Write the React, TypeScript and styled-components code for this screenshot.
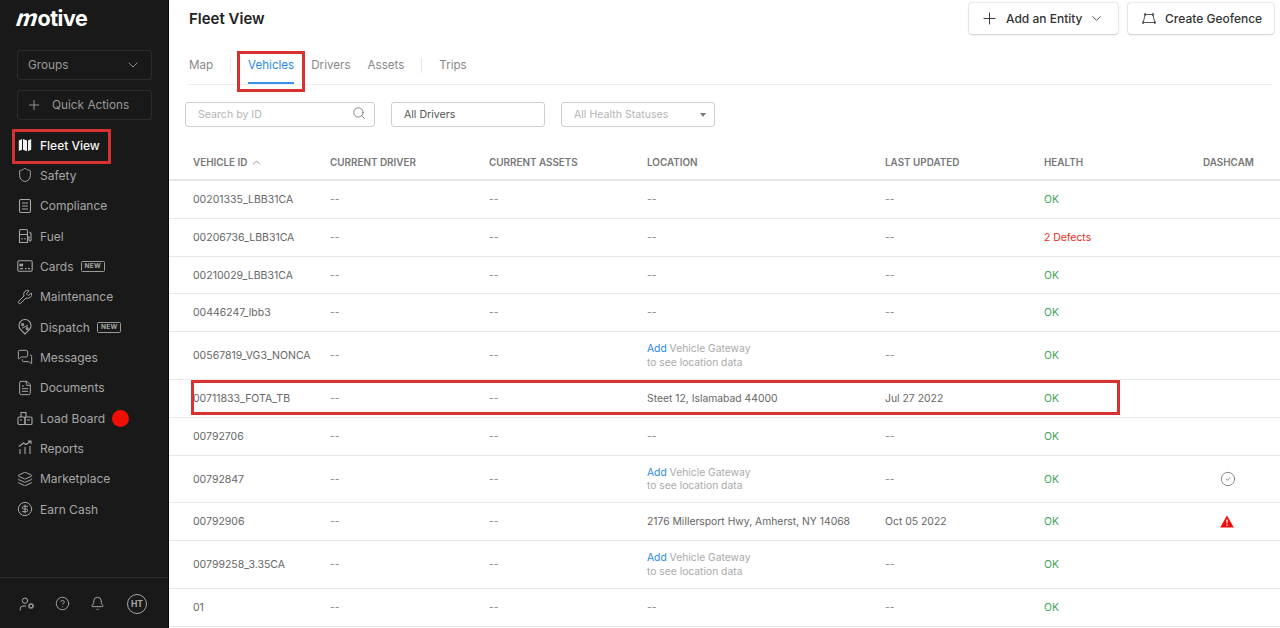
import styled, { createGlobalStyle } from "styled-components";
import {
  Bell,
  ChevronDown,
  ChevronUp,
  CircleCheck,
  CircleDollarSign,
  CircleHelp,
  FileText,
  Layers,
  MessagesSquare,
  Plus,
  Search,
  Shield,
  UserCog,
  Wrench,
} from "lucide-react";
import type { ReactNode } from "react";

const GlobalStyle = createGlobalStyle`
  html, body {
    margin: 0;
    padding: 0;
    background: #fff;
    font-family: Inter, "Liberation Sans", sans-serif;
  }
  * { box-sizing: border-box; }
`;

const MapIcon = () => (
  <svg width="16" height="16" viewBox="0 0 16 16" fill="#f2f2f2">
    <path d="M1.8 3.4 5 2v10.8l-3.2 1.2z" />
    <path d="M6 2l4 1.4v10.8L6 12.8z" />
    <path d="M11 3.4 14.2 2v10.8L11 14.2z" />
  </svg>
);

const ComplianceIcon = () => (
  <svg width="16" height="16" viewBox="0 0 16 16" fill="none" stroke="#a6a6a6" strokeWidth="1.1">
    <rect x="2.5" y="1.5" width="11" height="13" rx="1.5" />
    <path d="M5 5h6M5 8h6M5 11h6" />
  </svg>
);

const FuelIcon = () => (
  <svg width="16" height="16" viewBox="0 0 16 16" fill="none" stroke="#a6a6a6" strokeWidth="1.1">
    <path d="M2.5 14.5V3A1.5 1.5 0 0 1 4 1.500h5A1.500 1.500 0 0 1 10.500 3v11.500z" />
    <path d="M2.500 6.500h8M5 10v1.500M8 10v1.500" />
    <path d="M10.500 9H12v3a1 1 0 0 0 2 0V5.500L12.500 4" />
  </svg>
);

const CardIcon = () => (
  <svg width="16" height="16" viewBox="0 0 16 16" fill="none" stroke="#a6a6a6" strokeWidth="1.1">
    <rect x="0.8" y="2.8" width="14.4" height="10.4" rx="1.2" />
    <path d="M3 6.200h2.500v1.600H3z" fill="#a6a6a6" />
    <path d="M3 10.600h3M8 10.600h1.500M11 10.600h2" />
  </svg>
);

const DispatchIcon = () => (
  <svg width="16" height="16" viewBox="0 0 16 16" fill="none" stroke="#a6a6a6" strokeWidth="1.1">
    <path d="M8 15 3.400 10.400a6 6 0 1 1 9.200 0z" />
    <path d="M5.500 9.500c0-2 5-1.500 5-3.500" />
    <circle cx="5.600" cy="5.600" r="1" />
    <circle cx="10.200" cy="9.600" r="1" />
  </svg>
);

const LoadBoardIcon = () => (
  <svg width="16" height="16" viewBox="0 0 16 16" fill="none" stroke="#a6a6a6" strokeWidth="1.1">
    <path d="M4 7V2.500h5V7" />
    <rect x="1" y="7" width="7" height="7.500" rx="1" />
    <rect x="8" y="7" width="7" height="7.500" rx="1" />
    <path d="M3 10h2M10 10h3" />
  </svg>
);

const ReportsIcon = () => (
  <svg width="16" height="16" viewBox="0 0 16 16" fill="none" stroke="#a6a6a6" strokeWidth="1.1">
    <path d="M3 14V9M8 14V7M13 14V6" />
    <path d="M2 6.500 6.500 3 9 4.500 14 1M11 1h3v3" />
  </svg>
);

const GeofenceIcon = () => (
  <svg width="14" height="14" viewBox="0 0 14 14" fill="none" stroke="#555" strokeWidth="1">
    <path d="M3.200 2.500h7.600l2 8H1.200z" />
    <circle cx="3.200" cy="2.500" r="0.9" fill="#555" />
    <circle cx="10.800" cy="2.500" r="0.9" fill="#555" />
    <circle cx="1.200" cy="10.500" r="0.9" fill="#555" />
    <circle cx="12.800" cy="10.500" r="0.9" fill="#555" />
  </svg>
);

const AlertIcon = () => (
  <svg width="14" height="13" viewBox="0 0 14 13">
    <path d="M7 0.500 13.800 12.500H0.200z" fill="#f00a0a" />
    <path d="M6.300 4.500h1.400l-0.200 4h-1z" fill="#fff" />
    <circle cx="7" cy="10.300" r="0.8" fill="#fff" />
  </svg>
);

const Page = styled.div`
  position: relative;
  display: flex;
  width: 1280px;
  height: 628px;
  overflow: hidden;
  background: #fff;
`;

const Sidebar = styled.aside`
  display: flex;
  flex-direction: column;
  flex: 0 0 169px;
  height: 628px;
  background: #191919;
  border-right: 1px solid #0a0a0a;
`;

const Logo = styled.div`
  height: 50px;
  padding: 3px 0 0 17px;
  color: #fff;
  font-size: 21.5px;
  line-height: 30px;
  font-weight: 700;
  letter-spacing: -0.5px;
`;

const LogoM = styled.span`
  display: inline-block;
  font-size: 23px;
  transform: skewX(-18deg);
`;

const SideBox = styled.div`
  display: flex;
  align-items: center;
  width: 135px;
  height: 30px;
  margin-left: 17px;
  padding: 0 10px 1px;
  border: 1px solid #2c2c2c;
  border-radius: 3px;
  color: #9a9a9a;
  font-size: 11.8px;
`;

const GroupsBox = styled(SideBox)`
  justify-content: space-between;
  margin-bottom: 10px;
`;

const QuickBox = styled(SideBox)`
  gap: 10px;
  padding-left: 8px;
  margin-bottom: 10px;
`;

const Nav = styled.nav`
  display: flex;
  flex-direction: column;
`;

const NavRow = styled.div<{ $active?: boolean }>`
  display: flex;
  align-items: center;
  height: 30.33px;
  padding-left: 17px;
  gap: 7px;
  color: ${({ $active }) => ($active ? "#f5f5f5" : "#a6a6a6")};
  font-size: 12px;
  font-weight: ${({ $active }) => ($active ? 500 : 400)};
`;

const NavIconBox = styled.span`
  display: flex;
  justify-content: center;
  width: 16px;
`;

const NewTag = styled.span`
  padding: 0 3px;
  height: 11px;
  border: 1px solid #9a9a9a;
  border-radius: 1.5px;
  color: #aaa;
  font-size: 6.5px;
  line-height: 9px;
  font-weight: 700;
  letter-spacing: 0.3px;
`;

const RedDot = styled.span`
  width: 17px;
  height: 17px;
  border-radius: 50%;
  background: #f10f05;
`;

const SideFooter = styled.div`
  display: flex;
  align-items: center;
  gap: 20px;
  margin-top: auto;
  height: 51px;
  padding: 1px 0 0 19px;
  border-top: 1px solid #2a2a2a;
  color: #a6a6a6;
`;

const Avatar = styled.span`
  display: flex;
  align-items: center;
  justify-content: center;
  width: 20px;
  height: 20px;
  margin-left: 2px;
  border: 1px solid #a6a6a6;
  border-radius: 50%;
  font-size: 8.5px;
  font-weight: 700;
`;

const Main = styled.main`
  display: flex;
  flex-direction: column;
  flex: 1;
  min-width: 0;
`;

const TopBar = styled.header`
  display: flex;
  align-items: flex-start;
  justify-content: space-between;
  height: 46px;
  padding: 3px 6px 0 20px;
`;

const Title = styled.h1`
  margin: 0;
  color: #222;
  font-size: 15px;
  line-height: 32px;
  font-weight: 600;
`;

const TopActions = styled.div`
  display: flex;
  gap: 10px;
`;

const ActionButton = styled.div<{ $width: number; $pad: number; $gap: number }>`
  display: flex;
  align-items: center;
  width: ${({ $width }) => $width}px;
  height: 31px;
  padding-left: ${({ $pad }) => $pad}px;
  gap: ${({ $gap }) => $gap}px;
  border-radius: 3px;
  background: #fff;
  box-shadow: 0 0 2px rgba(0, 0, 0, 0.28), 0 1px 2px rgba(0, 0, 0, 0.12);
  color: #333;
  font-size: 12px;
  font-weight: 500;
`;

const Tabs = styled.div`
  display: flex;
  align-items: flex-start;
  height: 39px;
  margin: 0 8px 0 20px;
  border-bottom: 1px solid #eee;
`;

const TabGroup = styled.div`
  display: flex;
  align-items: flex-start;
  gap: 17px;
`;

const Tab = styled.div<{ $active?: boolean }>`
  height: 38px;
  padding-top: 12px;
  color: ${({ $active }) => ($active ? "#2b88e6" : "#888")};
  border-bottom: ${({ $active }) => ($active ? "2px solid #3a92ea" : "none")};
  font-size: 11.6px;
  line-height: 15px;
`;

const TabRule = styled.span`
  width: 1px;
  height: 15px;
  margin-top: 12px;
  background: #e8e8e8;
`;

const Filters = styled.div`
  display: flex;
  gap: 16px;
  height: 25px;
  margin: 17px 0 0 16px;
`;

const Field = styled.div<{ $width: number; $muted?: boolean }>`
  display: flex;
  align-items: center;
  justify-content: space-between;
  width: ${({ $width }) => $width}px;
  padding: 0 8px 0 12px;
  border: 1px solid #cfcfcf;
  border-radius: 3px;
  color: ${({ $muted }) => ($muted ? "#b5b5b5" : "#555")};
  font-size: 10.6px;
`;

const SearchGlyph = styled(Search)`
  margin-bottom: 3px;
`;

const Caret = styled.span`
  width: 0;
  height: 0;
  border-left: 3.5px solid transparent;
  border-right: 3.5px solid transparent;
  border-top: 4.5px solid #777;
`;

const columns = "161px 159px 158px 238px 159px 159px 1fr";

const HeadRow = styled.div`
  display: grid;
  grid-template-columns: ${columns};
  align-items: center;
  height: 54px;
  padding-top: 18px;
  border-bottom: 2px solid #e6e6e6;
  color: #777;
  font-size: 9.9px;
  font-weight: 600;
`;

const HeadCell = styled.div<{ $first?: boolean }>`
  display: flex;
  align-items: center;
  gap: 3px;
  padding-left: ${({ $first }) => ($first ? "24px" : "0")};
`;

const Row = styled.div<{ $height: number }>`
  display: grid;
  grid-template-columns: ${columns};
  align-items: center;
  height: ${({ $height }) => $height}px;
  border-bottom: 1px solid #e8e8e8;
  color: #666;
  font-size: 10.4px;
  line-height: 13px;
`;

const IdCell = styled.div`
  padding-left: 24px;
  font-size: 10.5px;
`;

const Location = styled.div`
  font-size: 10.35px;
`;

const Dash = styled.div`
  color: #888;
`;

const Health = styled.div<{ $bad?: boolean }>`
  color: ${({ $bad }) => ($bad ? "#f02b20" : "#3fa45b")};
`;

const CamCell = styled.div`
  display: flex;
  padding-left: 17px;
`;

const Gateway = styled.div`
  color: #aaa;
  font-size: 10.3px;
  line-height: 13.5px;
`;

const AddLink = styled.span`
  color: #2b88e6;
`;

const Callout = styled.div<{ $x: number; $y: number; $w: number; $h: number }>`
  position: absolute;
  left: ${({ $x }) => $x}px;
  top: ${({ $y }) => $y}px;
  width: ${({ $w }) => $w}px;
  height: ${({ $h }) => $h}px;
  border: 3px solid #d93030;
  pointer-events: none;
`;

const ic = { size: 16, strokeWidth: 1.5, color: "#a6a6a6" };

const navItems: { label: string; icon: ReactNode; active?: boolean; tag?: boolean; dot?: boolean }[] = [
  { label: "Fleet View", icon: <MapIcon />, active: true },
  { label: "Safety", icon: <Shield {...ic} /> },
  { label: "Compliance", icon: <ComplianceIcon /> },
  { label: "Fuel", icon: <FuelIcon /> },
  { label: "Cards", icon: <CardIcon />, tag: true },
  { label: "Maintenance", icon: <Wrench {...ic} /> },
  { label: "Dispatch", icon: <DispatchIcon />, tag: true },
  { label: "Messages", icon: <MessagesSquare {...ic} /> },
  { label: "Documents", icon: <FileText {...ic} /> },
  { label: "Load Board", icon: <LoadBoardIcon />, dot: true },
  { label: "Reports", icon: <ReportsIcon /> },
  { label: "Marketplace", icon: <Layers {...ic} /> },
  { label: "Earn Cash", icon: <CircleDollarSign {...ic} /> },
];

type Vehicle = {
  id: string;
  height: number;
  location?: string;
  gateway?: boolean;
  updated?: string;
  health?: string;
  cam?: "ok" | "alert";
};

const vehicles: Vehicle[] = [
  { id: "00201335_LBB31CA", height: 38 },
  { id: "00206736_LBB31CA", height: 38, health: "2 Defects" },
  { id: "00210029_LBB31CA", height: 37 },
  { id: "00446247_lbb3", height: 38 },
  { id: "00567819_VG3_NONCA", height: 48, gateway: true },
  { id: "00711833_FOTA_TB", height: 38, location: "Steet 12, Islamabad 44000", updated: "Jul 27 2022" },
  { id: "00792706", height: 38 },
  { id: "00792847", height: 47, gateway: true, cam: "ok" },
  { id: "00792906", height: 38, location: "2176 Millersport Hwy, Amherst, NY 14068", updated: "Oct 05 2022", cam: "alert" },
  { id: "00799258_3.35CA", height: 48, gateway: true },
  { id: "01", height: 38 },
];

const App = () => (
  <>
    <GlobalStyle />
    <Page>
      <Sidebar>
        <Logo>
          <LogoM>m</LogoM>otive
        </Logo>
        <GroupsBox>
          Groups
          <ChevronDown size={16} strokeWidth={1.4} />
        </GroupsBox>
        <QuickBox>
          <Plus size={16} strokeWidth={1.4} />
          Quick Actions
        </QuickBox>
        <Nav>
          {navItems.map((item) => (
            <NavRow key={item.label} $active={item.active}>
              <NavIconBox>{item.icon}</NavIconBox>
              {item.label}
              {item.tag && <NewTag>NEW</NewTag>}
              {item.dot && <RedDot />}
            </NavRow>
          ))}
        </Nav>
        <SideFooter>
          <UserCog size={16} strokeWidth={1.5} />
          <CircleHelp size={15} strokeWidth={1.5} />
          <Bell size={15} strokeWidth={1.5} />
          <Avatar>HT</Avatar>
        </SideFooter>
      </Sidebar>
      <Main>
        <TopBar>
          <Title>Fleet View</Title>
          <TopActions>
            <ActionButton $width={149} $pad={11} $gap={7}>
              <Plus size={19} strokeWidth={1.2} />
              Add an Entity
              <ChevronDown size={15} strokeWidth={1.4} />
            </ActionButton>
            <ActionButton $width={146} $pad={14} $gap={9}>
              <GeofenceIcon />
              Create Geofence
            </ActionButton>
          </TopActions>
        </TopBar>
        <Tabs>
          <TabGroup>
            <Tab>Map</Tab>
            <TabRule />
            <Tab $active>Vehicles</Tab>
            <Tab>Drivers</Tab>
            <Tab>Assets</Tab>
            <TabRule />
            <Tab>Trips</Tab>
          </TabGroup>
        </Tabs>
        <Filters>
          <Field $width={190} $muted>
            Search by ID
            <SearchGlyph size={14} strokeWidth={1.5} color="#777" />
          </Field>
          <Field $width={154}>All Drivers</Field>
          <Field $width={154} $muted>
            All Health Statuses
            <Caret />
          </Field>
        </Filters>
        <HeadRow>
          <HeadCell $first>
            VEHICLE ID
            <ChevronUp size={13} strokeWidth={1.4} />
          </HeadCell>
          <HeadCell>CURRENT DRIVER</HeadCell>
          <HeadCell>CURRENT ASSETS</HeadCell>
          <HeadCell>LOCATION</HeadCell>
          <HeadCell>LAST UPDATED</HeadCell>
          <HeadCell>HEALTH</HeadCell>
          <HeadCell>DASHCAM</HeadCell>
        </HeadRow>
        {vehicles.map((v) => (
          <Row key={v.id} $height={v.height}>
            <IdCell>{v.id}</IdCell>
            <Dash>--</Dash>
            <Dash>--</Dash>
            {v.gateway ? (
              <Gateway>
                <AddLink>Add</AddLink> Vehicle Gateway
                <br />
                to see location data
              </Gateway>
            ) : v.location ? (
              <Location>{v.location}</Location>
            ) : (
              <Dash>--</Dash>
            )}
            {v.updated ? <div>{v.updated}</div> : <Dash>--</Dash>}
            <Health $bad={!!v.health}>{v.health ?? "OK"}</Health>
            <CamCell>
              {v.cam === "ok" && <CircleCheck size={16} strokeWidth={1.3} color="#777" />}
              {v.cam === "alert" && <AlertIcon />}
            </CamCell>
          </Row>
        ))}
      </Main>
      <Callout $x={12} $y={129} $w={99} $h={35} />
      <Callout $x={237} $y={51} $w={68} $h={41} />
      <Callout $x={191} $y={380} $w={929} $h={35} />
    </Page>
  </>
);

export default App;
